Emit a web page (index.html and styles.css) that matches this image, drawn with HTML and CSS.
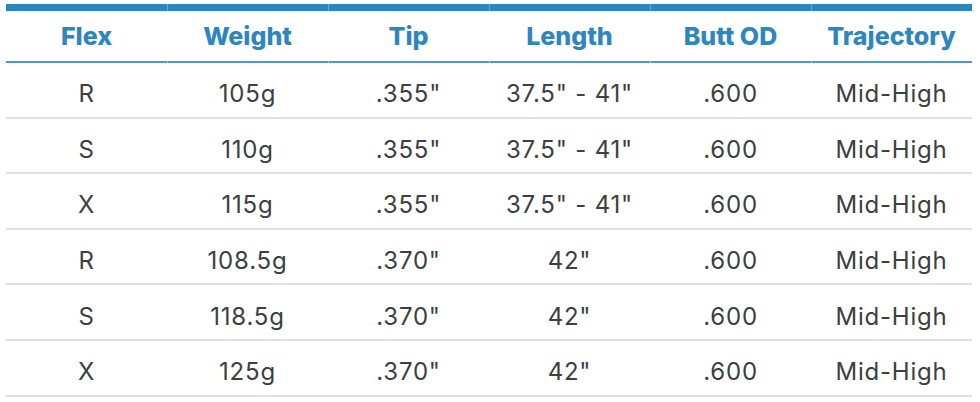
FILE: index.html
```html
<!DOCTYPE html>
<html lang="en">
<head>
<meta charset="utf-8">
<title>Shaft specs</title>
<link rel="stylesheet" href="styles.css">
</head>
<body>
<div class="wrap">
<table class="specs">
<thead>
<tr><th>Flex</th><th>Weight</th><th>Tip</th><th>Length</th><th>Butt OD</th><th>Trajectory</th></tr>
</thead>
<tbody>
<tr><td>R</td><td>105g</td><td>.355"</td><td>37.5" - 41"</td><td>.600</td><td>Mid-High</td></tr>
<tr><td>S</td><td>110g</td><td>.355"</td><td>37.5" - 41"</td><td>.600</td><td>Mid-High</td></tr>
<tr><td>X</td><td>115g</td><td>.355"</td><td>37.5" - 41"</td><td>.600</td><td>Mid-High</td></tr>
<tr><td>R</td><td>108.5g</td><td>.370"</td><td>42"</td><td>.600</td><td>Mid-High</td></tr>
<tr><td>S</td><td>118.5g</td><td>.370"</td><td>42"</td><td>.600</td><td>Mid-High</td></tr>
<tr><td>X</td><td>125g</td><td>.370"</td><td>42"</td><td>.600</td><td>Mid-High</td></tr>
</tbody>
</table>
</div>
</body>
</html>
```
FILE: styles.css
```css
html, body {
  margin: 0;
  padding: 0;
  background: #ffffff;
}
.wrap {
  padding: 4px 8px 0 6px;
}
.specs {
  width: 966px;
  border-collapse: separate;
  border-spacing: 0;
  table-layout: fixed;
  font-family: Inter, "Liberation Sans", sans-serif;
}
.specs th {
  position: relative;
  height: 50px;
  padding: 0;
  border-top: 7px solid #2e86c1;
  border-bottom: 2px solid #4f97cc;
  color: #2e86c1;
  font-size: 25px;
  font-weight: 800;
  letter-spacing: 0;
  text-align: center;
  vertical-align: middle;
}
.specs th + th::after {
  content: "";
  position: absolute;
  left: 0;
  top: -7px;
  width: 1px;
  height: 7px;
  background: #6aaad8;
}
.specs th + th::before {
  content: "";
  position: absolute;
  left: 0;
  bottom: -2px;
  width: 1px;
  height: 2px;
  background: #9cc6e6;
}
.specs td {
  height: 45.6px;
  padding: 0;
  padding-top: 8px;
  border-bottom: 2px solid #e0e0e0;
  color: #3b4040;
  font-size: 24px;
  font-weight: 400;
  letter-spacing: 0.8px;
  text-align: center;
  vertical-align: middle;
}
```
